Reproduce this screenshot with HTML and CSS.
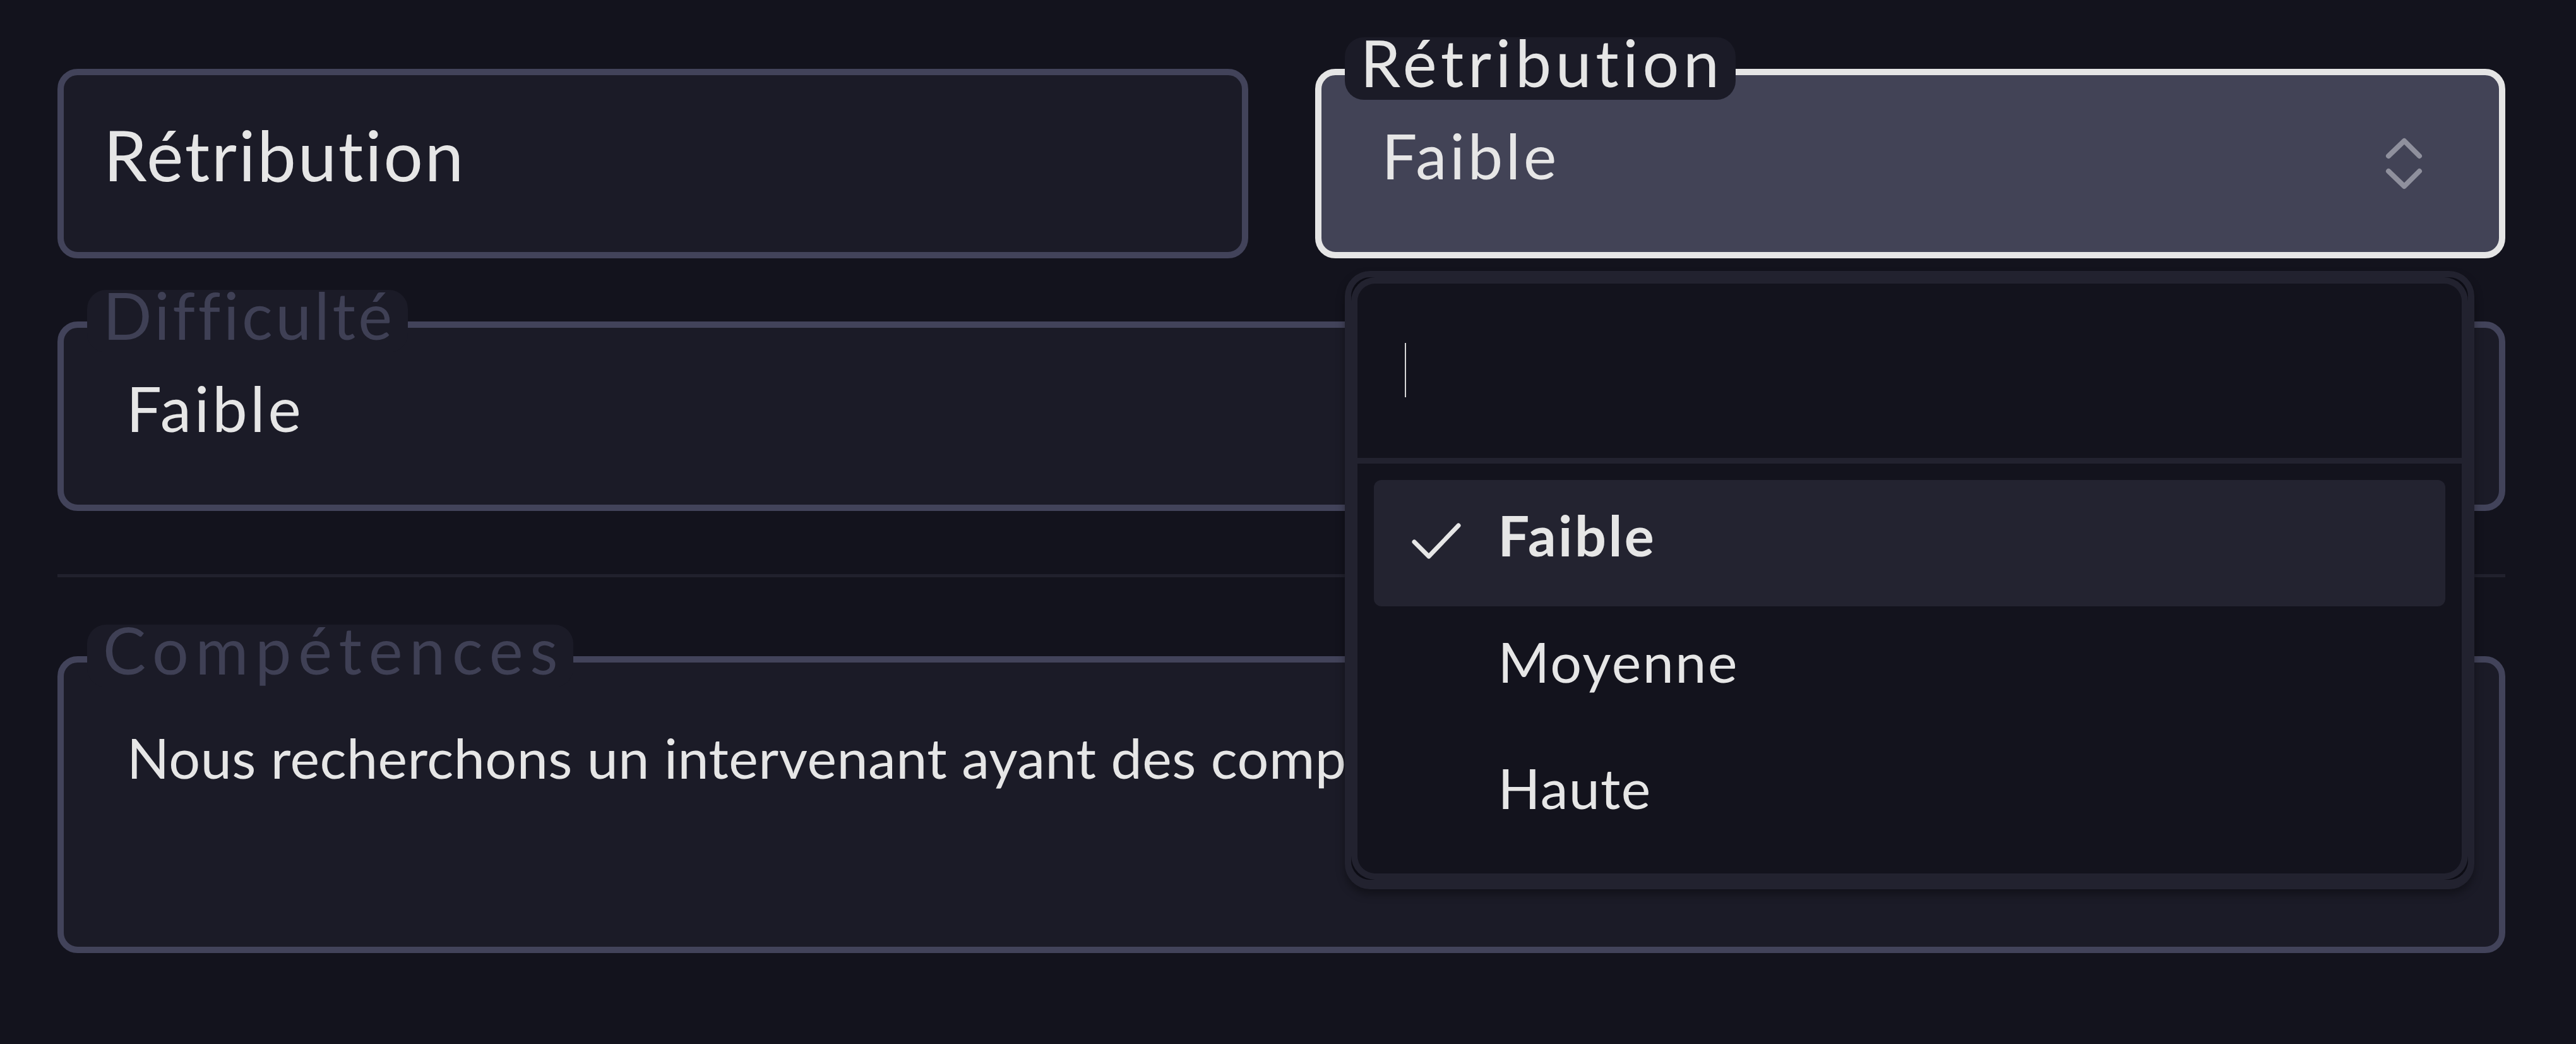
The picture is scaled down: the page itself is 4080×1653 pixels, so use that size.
FILE: index.html
```html
<!DOCTYPE html>
<html lang="fr">
<head>
<meta charset="utf-8">
<title>Formulaire</title>
<link rel="stylesheet" href="styles.css">
</head>
<body>
<div class="page">
  <div class="row">
    <div class="field field-empty">
      <span class="placeholder">Rétribution</span>
    </div>
    <div class="field field-focus">
      <span class="label label-focus">Rétribution</span>
      <span class="value">Faible</span>
      <svg class="chevrons" width="60" height="84" viewBox="0 0 60 84" aria-hidden="true">
        <path d="M5 30 L30 6 L54 30" />
        <path d="M5 54 L30 78 L54 54" />
      </svg>
      <div class="menu">
        <div class="menu-mid">
          <div class="menu-inner">
            <div class="search"><span class="caret"></span></div>
            <div class="sep"></div>
            <ul class="options">
              <li class="option selected">
                <span class="check-slot">
                  <svg class="check" width="80" height="60" viewBox="0 0 80 60" aria-hidden="true">
                    <path d="M4 30 L27 53 L74 4" />
                  </svg>
                </span>
                <span class="option-text">Faible</span>
              </li>
              <li class="option">
                <span class="check-slot"></span>
                <span class="option-text">Moyenne</span>
              </li>
              <li class="option option-short">
                <span class="check-slot"></span>
                <span class="option-text">Haute</span>
              </li>
            </ul>
          </div>
        </div>
      </div>
    </div>
  </div>

  <div class="field field-wide">
    <span class="label label-difficulty">Difficulté</span>
    <span class="value">Faible</span>
  </div>

  <hr class="divider">

  <div class="field field-area">
    <span class="label label-skills">Compétences</span>
    <p class="area-text">Nous recherchons un intervenant ayant des compétences en gestion de projet.</p>
  </div>
</div>
</body>
</html>
```

FILE: styles.css
```css
* {
  box-sizing: border-box;
}

html, body {
  margin: 0;
  background: #13131d;
}

body {
  font-family: Lato, "Liberation Sans", sans-serif;
  font-variant-ligatures: none;
  letter-spacing: 0.03em;
  color: #e6e6e6;
}

.page {
  padding: 109px 112px 144px 91px;
}

.row {
  display: grid;
  grid-template-columns: 1fr 1fr;
  column-gap: 106px;
}

.field {
  position: relative;
  height: 300px;
  border: 10px solid #42435a;
  border-radius: 32px;
  background: #1b1b27;
}

.field-empty {
  padding: 59px 0 0 63px;
}

.placeholder {
  display: block;
  font-size: 110px;
  line-height: 1.2;
  letter-spacing: 0.026em;
  color: #e6e6e6;
}

.field-focus {
  display: flex;
  justify-content: space-between;
  align-items: flex-start;
  padding: 68px 120px 0 96px;
  border-color: #e5e5e5;
  background: #424356;
}

.value {
  font-size: 99px;
  line-height: 1.2;
  letter-spacing: 0.048em;
  color: #e6e6e6;
}

.chevrons {
  display: block;
  margin-top: 30px;
  fill: none;
  stroke: #8f909d;
  stroke-width: 8;
  stroke-linecap: round;
  stroke-linejoin: round;
}

.label {
  position: absolute;
  top: -60px;
  left: 37px;
  height: 99px;
  padding: 0 20px 19px 25px;
  font-size: 102px;
  line-height: 80px;
  letter-spacing: 0.065em;
  white-space: nowrap;
  background: #1b1b27;
  border-radius: 30px;
  color: #3f4055;
}

.label-focus {
  color: #e6e6e6;
}

.label-difficulty {
  letter-spacing: 0.045em;
}

.label-skills {
  letter-spacing: 0.106em;
  padding-right: 14px;
}

/* dropdown menu */
.menu {
  position: absolute;
  top: 310px;
  left: 37px;
  width: 1789px;
  z-index: 10;
  padding: 10px 10px 15px;
  background: #22222f;
  border-radius: 40px;
  box-shadow: 0 8px 14px rgba(0, 0, 0, 0.35);
}

.menu-mid {
  padding: 10px;
  background: #0c0c14;
  border-radius: 30px;
}

.menu-inner {
  background: #13131d;
  border-radius: 28px;
  box-shadow: 0 0 0 10px #22222f;
}

.search {
  height: 276px;
  padding: 94px 0 0 75px;
}

.caret {
  display: block;
  width: 2px;
  height: 86px;
  background: #d6d6d6;
}

.sep {
  height: 9px;
  background: #22222f;
}

.options {
  list-style: none;
  margin: 0;
  padding: 26px 26px 23px;
}

.option {
  display: flex;
  align-items: flex-start;
  height: 200px;
  padding-left: 60px;
  border-radius: 12px;
  font-size: 88px;
  line-height: 1.2;
  letter-spacing: 0.028em;
  color: #e6e6e6;
}

.option-short {
  letter-spacing: 0.015em;
}

.option.selected {
  background: #232330;
  font-weight: 700;
  letter-spacing: 0.04em;
}

.check-slot {
  flex: none;
  width: 80px;
  height: 60px;
  margin-top: 68px;
  margin-right: 57px;
}

.check {
  display: block;
  fill: none;
  stroke: #e6e6e6;
  stroke-width: 7;
  stroke-linecap: round;
  stroke-linejoin: round;
}

.option-text {
  margin-top: 35px;
}

/* lower fields */
.field-wide {
  margin-top: 100px;
  padding: 68px 0 0 99px;
}

.divider {
  height: 5px;
  margin: 100px 0 0;
  border: 0;
  background: #21212d;
}

.field-area {
  height: 470px;
  margin-top: 125px;
  padding: 98px 0 0 100px;
}

.area-text {
  max-width: 1928px;
  margin: 0;
  font-size: 88px;
  line-height: 1.2;
  white-space: nowrap;
  overflow: hidden;
  color: #e6e6e6;
}
```
